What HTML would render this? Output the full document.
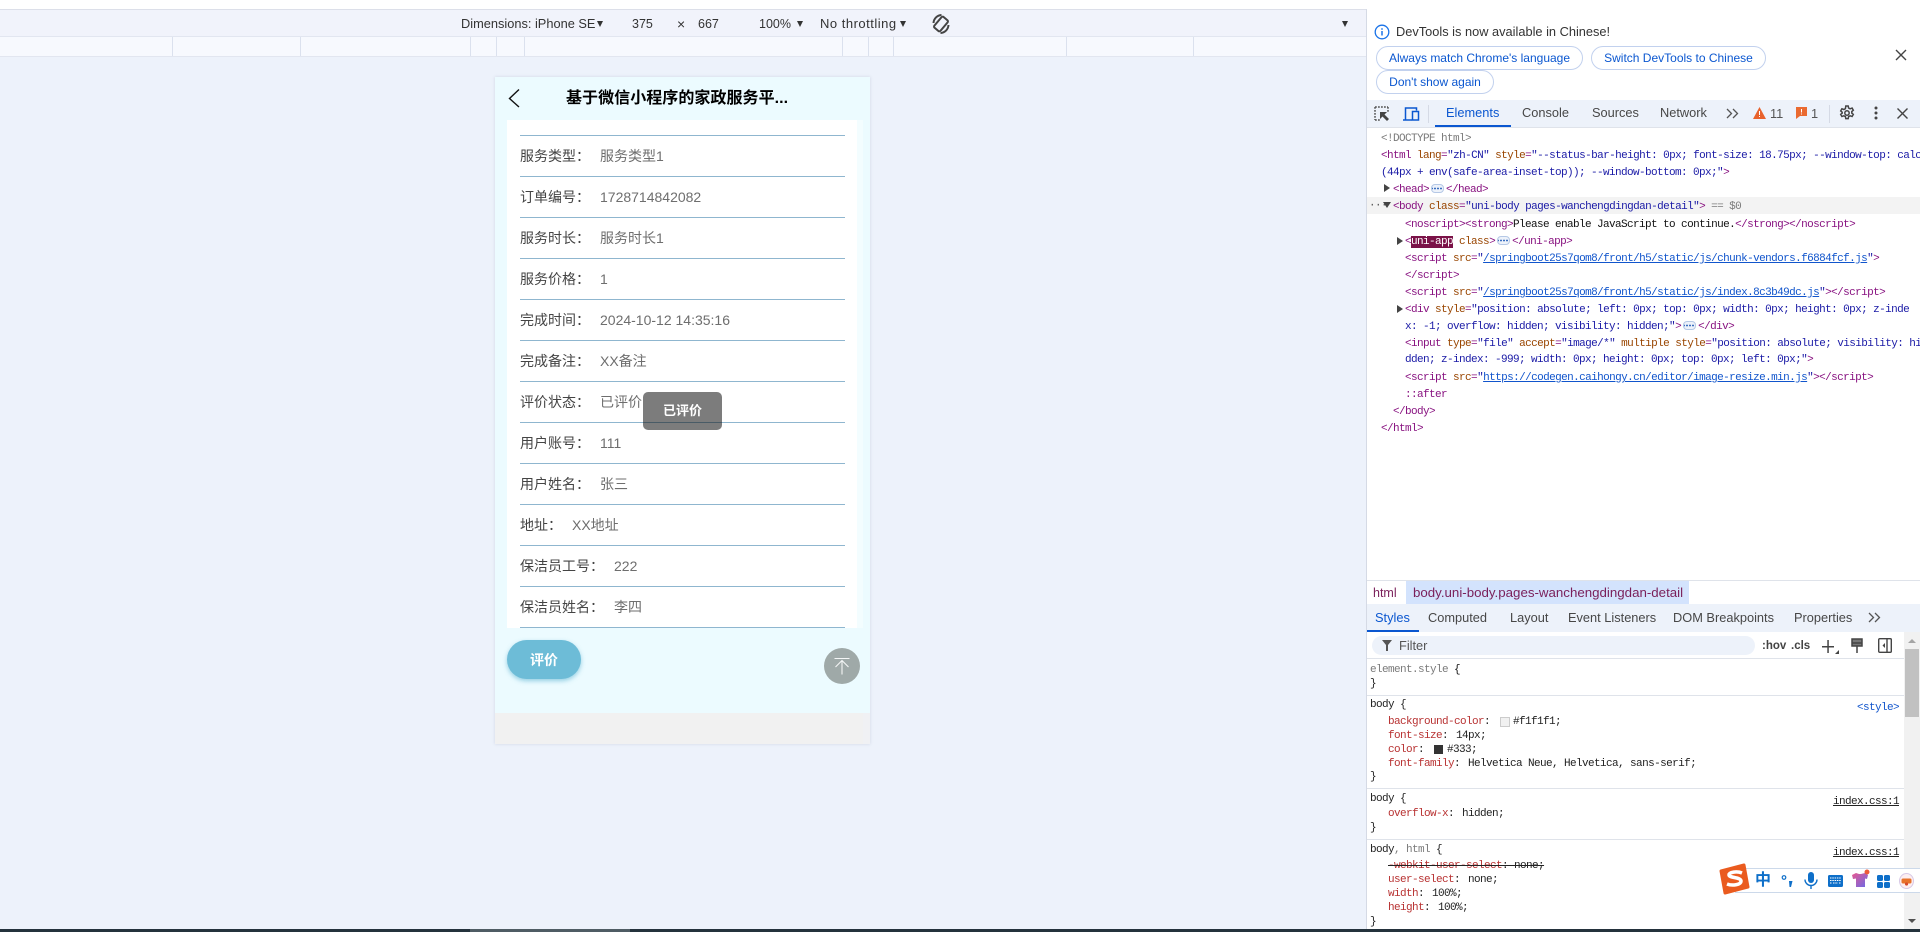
<!DOCTYPE html>
<html lang="zh-CN"><head><meta charset="utf-8"><title>DevTools</title>
<style>
html,body{margin:0;padding:0;width:1920px;height:932px;overflow:hidden;background:#edf2fb;font-family:"Liberation Sans","Noto Sans CJK SC",sans-serif}
div,span.a,svg.a{position:absolute}
.t{white-space:nowrap;font-size:12px;line-height:16px;height:16px;color:#333}
.r{position:absolute;top:37px;width:1px;height:19px;background:#dbe1ee}
.l{position:absolute;left:520px;width:325px;height:1px;background:#8fb6cf}
.k,.v{position:absolute;font-size:14px;line-height:20px;height:20px;white-space:nowrap}
.k{left:520px;color:#444}.v{color:#6e6e6e}
.tab{position:absolute;white-space:nowrap;font-size:12.8px;line-height:16px;height:16px;color:#474747}
.btn{position:absolute;box-sizing:border-box;height:24px;border:1px solid #c2d1ee;border-radius:12px;background:#fff;color:#0b57d0;font-size:12px;line-height:22px;text-align:center;white-space:nowrap}
.c{position:absolute;margin-top:1px;font-family:"Liberation Mono","Noto Sans CJK SC",monospace;font-size:11px;letter-spacing:-.6px;line-height:14px;height:14px;white-space:pre;color:#222}
.g{color:#881280}.n{color:#994500}.s{color:#1a1aa6}.u{color:#1155cc;text-decoration:underline}.h{color:#7b7b7b}.p{color:#b83232}.w{color:#111}
.dots{display:inline-block;width:13px;height:9px;border:1px solid #b5c8e6;border-radius:4px;background:#edf2fa radial-gradient(circle,#3b6fc0 0 .8px,transparent 1px) 1.500px 50%/3px 3px repeat-x;vertical-align:-1px;margin:0 2px;box-sizing:border-box;position:relative}
.tri{position:absolute;width:0;height:0;border-style:solid;border-color:transparent}
.sep{position:absolute;left:1366px;width:538px;height:1px;background:#dfe3ea}
</style></head><body>
<!-- top -->
<div style="left:0;top:0;width:1920px;height:9px;background:#fff"></div>
<div style="left:0;top:9px;width:1366px;height:1px;background:#dcdfe9"></div>
<div style="left:0;top:10px;width:1366px;height:26px;background:#f1f3fb"></div>
<div style="left:0;top:36px;width:1366px;height:1px;background:#e2e6f0"></div>
<div style="left:0;top:37px;width:1366px;height:19px;background:#f7f9fe"></div>
<div style="left:0;top:56px;width:1366px;height:1px;background:#e2e6f0"></div>
<div class="t" style="left:461px;top:16px;font-size:12.8px">Dimensions: iPhone SE</div>
<div class="tri" style="left:597px;top:21px;border-width:6px 3.500px 0;border-top-color:#333"></div>
<div class="t" style="left:632px;top:16px;font-size:12.500px">375</div>
<div class="t" style="left:677px;top:16px;font-size:14px">×</div>
<div class="t" style="left:698px;top:16px;font-size:12.500px">667</div>
<div class="t" style="left:759px;top:16px;font-size:12.500px">100%</div>
<div class="tri" style="left:797px;top:21px;border-width:6px 3.500px 0;border-top-color:#333"></div>
<div class="t" style="left:820px;top:16px;font-size:13px;letter-spacing:.5px">No throttling</div>
<div class="tri" style="left:900px;top:21px;border-width:6px 3.500px 0;border-top-color:#333"></div>
<svg class="a" style="left:931px;top:12px" width="20" height="24" viewBox="0 0 20 24" fill="none" stroke="#444" stroke-width="2"><rect x="6" y="5" width="8" height="14" rx="1.500" transform="rotate(40 10 12)"/><path d="M2.500 11a8.500 8.500 0 0 1 8-8M17.500 13a8.500 8.500 0 0 1-8 8"/></svg>
<div class="tri" style="left:1342px;top:21px;border-width:6px 3.500px 0;border-top-color:#333"></div>
<i class="r" style="left:172px"></i><i class="r" style="left:300px"></i><i class="r" style="left:470px"></i><i class="r" style="left:496px"></i><i class="r" style="left:524px"></i><i class="r" style="left:842px"></i><i class="r" style="left:868px"></i><i class="r" style="left:893px"></i><i class="r" style="left:1066px"></i><i class="r" style="left:1193px"></i>

<!-- phone -->
<div style="left:495px;top:77px;width:375px;height:667px;background:#ecfbff;box-shadow:0 0 3px rgba(120,130,160,.25)"></div>
<div style="left:495px;top:713px;width:368px;height:31px;background:#f1f1f1"></div>
<div style="left:863px;top:713px;width:7px;height:31px;background:#f0f1f4"></div>
<svg class="a" style="left:505px;top:87px" width="18" height="22" viewBox="0 0 18 22" fill="none" stroke="#111" stroke-width="1.400"><path d="M14 2.500 4.500 11.500 14 20"/></svg>
<div style="left:566px;top:88px;font-size:16px;font-weight:700;line-height:22px;color:#000;white-space:nowrap;letter-spacing:.05px">基于微信小程序的家政服务平...</div>
<div style="left:857px;top:120px;width:6px;height:508px;background:#f3fdff"></div>
<div style="left:507px;top:120px;width:350px;height:508px;background:#fff"></div>
<i class="l" style="top:135px"></i><i class="l" style="top:176px"></i><i class="l" style="top:217px"></i><i class="l" style="top:258px"></i><i class="l" style="top:299px"></i><i class="l" style="top:340px"></i><i class="l" style="top:381px"></i><i class="l" style="top:422px"></i><i class="l" style="top:463px"></i><i class="l" style="top:504px"></i><i class="l" style="top:545px"></i><i class="l" style="top:586px"></i><i class="l" style="top:627px"></i>
<div class="k" style="top:146px">服务类型：</div><div class="v" style="left:600px;top:146px">服务类型1</div>
<div class="k" style="top:187px">订单编号：</div><div class="v" style="left:600px;top:187px">1728714842082</div>
<div class="k" style="top:228px">服务时长：</div><div class="v" style="left:600px;top:228px">服务时长1</div>
<div class="k" style="top:269px">服务价格：</div><div class="v" style="left:600px;top:269px">1</div>
<div class="k" style="top:310px">完成时间：</div><div class="v" style="left:600px;top:310px">2024-10-12 14:35:16</div>
<div class="k" style="top:351px">完成备注：</div><div class="v" style="left:600px;top:351px">XX备注</div>
<div class="k" style="top:392px">评价状态：</div><div class="v" style="left:600px;top:392px">已评价</div>
<div class="k" style="top:433px">用户账号：</div><div class="v" style="left:600px;top:433px">111</div>
<div class="k" style="top:474px">用户姓名：</div><div class="v" style="left:600px;top:474px">张三</div>
<div class="k" style="top:515px">地址：</div><div class="v" style="left:572px;top:515px">XX地址</div>
<div class="k" style="top:556px">保洁员工号：</div><div class="v" style="left:614px;top:556px">222</div>
<div class="k" style="top:597px">保洁员姓名：</div><div class="v" style="left:614px;top:597px">李四</div>
<div style="left:643px;top:392px;width:79px;height:38px;border-radius:5px;background:rgba(17,17,17,.55);color:#fff;font-size:13px;font-weight:700;line-height:38px;text-align:center">已评价</div>
<div style="left:507px;top:640px;width:74px;height:39px;border-radius:20px;background:#6dbcd7;box-shadow:0 2px 5px rgba(109,188,215,.7);color:#fff;font-size:14px;font-weight:700;line-height:41px;text-align:center">评价</div>
<div style="left:824px;top:648px;width:36px;height:36px;border-radius:18px;background:#9fa9a8"></div>
<svg class="a" style="left:824px;top:648px" width="36" height="36" viewBox="0 0 36 36" fill="none" stroke="#f4f6f6" stroke-width="1.100"><path d="M10.500 10.500h15M18 26.500V12.500M11.500 19 18 12.500l6.500 6.500"/></svg>

<!-- devtools -->
<div style="left:1366px;top:9px;width:554px;height:920px;background:#fff;border-left:1px solid #d5dae5;box-sizing:border-box"></div>
<svg class="a" style="left:1374px;top:24px" width="16" height="16" viewBox="0 0 16 16" fill="none"><circle cx="8" cy="8" r="6.800" stroke="#1a73e8" stroke-width="1.300"/><path d="M8 7v4.500M8 4.300v1.400" stroke="#1a73e8" stroke-width="1.500"/></svg>
<div class="tab" style="left:1396px;top:24px;color:#333">DevTools is now available in Chinese!</div>
<div class="btn" style="left:1376px;top:46px;width:207px">Always match Chrome's language</div>
<div class="btn" style="left:1591px;top:46px;width:175px">Switch DevTools to Chinese</div>
<div class="btn" style="left:1376px;top:70px;width:118px">Don't show again</div>
<svg class="a" style="left:1895px;top:49px" width="12" height="12" viewBox="0 0 12 12" stroke="#444" stroke-width="1.400"><path d="M1 1l10 10M11 1 1 11"/></svg>

<div style="left:1367px;top:100px;width:553px;height:27px;background:#edf2fa"></div>
<svg class="a" style="left:1374px;top:106px" width="16" height="16" viewBox="0 0 16 16" fill="none"><path d="M1 1h13M1 1v13M1 14h5M14 1v5" stroke="#555" stroke-width="1.500" stroke-dasharray="1.800 1.200"/><path d="M6 6h7l-2.500 2.500L15 13l-2 2-4.500-4.500L6 13z" fill="#444"/></svg>
<svg class="a" style="left:1402px;top:106px" width="18" height="16" viewBox="0 0 18 16" fill="none" stroke="#0b57d0" stroke-width="1.500"><path d="M1 14h9M3.500 14V2h11v2.500"/><rect x="10.500" y="5.500" width="6" height="8.500"/></svg>
<div style="left:1428px;top:105px;width:1px;height:18px;background:#d5dae5"></div>
<div class="tab" style="left:1446px;top:105px;color:#0b57d0">Elements</div>
<div style="left:1435px;top:125px;width:76px;height:2px;background:#0b57d0"></div>
<div class="tab" style="left:1522px;top:105px">Console</div>
<div class="tab" style="left:1592px;top:105px">Sources</div>
<div class="tab" style="left:1660px;top:105px">Network</div>
<svg class="a" style="left:1726px;top:108px" width="13" height="11" viewBox="0 0 13 11" fill="none" stroke="#555" stroke-width="1.300"><path d="M1 1l4.500 4.500L1 10M7 1l4.500 4.500L7 10"/></svg>
<svg class="a" style="left:1753px;top:107px" width="13" height="12" viewBox="0 0 13 12"><path d="M6.500 0 13 12H0z" fill="#e8622c"/><path d="M6 4h1v4H6zM6 9h1v1H6z" fill="#fff"/></svg>
<div class="tab" style="left:1770px;top:106px;color:#555">11</div>
<svg class="a" style="left:1796px;top:107px" width="11" height="12" viewBox="0 0 11 12"><path d="M0 0h11v9H4l-4 3z" fill="#ea6a30"/><path d="M5 2h1v3.500H5zM5 6.500h1v1H5z" fill="#fff"/></svg>
<div class="tab" style="left:1811px;top:106px;color:#555">1</div>
<div style="left:1829px;top:105px;width:1px;height:18px;background:#d5dae5"></div>
<svg class="a" style="left:1839px;top:105px" width="16" height="16" viewBox="0 0 16 16" fill="none" stroke="#444" stroke-width="1.500"><circle cx="8" cy="8" r="2.200"/><path d="M6.800 1h2.400l.4 2 1.500.8 2-.7 1.200 2.100-1.500 1.300v1.600l1.500 1.300-1.200 2.100-2-.7-1.500.8-.4 2H6.800l-.4-2-1.500-.8-2 .7-1.200-2.100 1.500-1.300V7.200L1.700 5.900l1.200-2.100 2 .7 1.500-.8z"/></svg>
<svg class="a" style="left:1874px;top:106px" width="4" height="14" viewBox="0 0 4 14" fill="#444"><circle cx="2" cy="2" r="1.500"/><circle cx="2" cy="7" r="1.500"/><circle cx="2" cy="12" r="1.500"/></svg>
<svg class="a" style="left:1897px;top:108px" width="11" height="11" viewBox="0 0 11 11" stroke="#444" stroke-width="1.400"><path d="M.5.500l10 10M10.500.500l-10 10"/></svg>
<div style="left:1367px;top:127px;width:553px;height:1px;background:#dfe3ea"></div>

<div style="left:1367px;top:197px;width:553px;height:17px;background:#f3f3f3"></div>
<div class="c h" style="left:1381px;top:131px">&lt;!DOCTYPE html&gt;</div>
<div class="c" style="left:1381px;top:148px"><span class="g">&lt;html</span> <span class="n">lang</span><span class="g">=</span><span class="s">"zh-CN"</span> <span class="n">style</span><span class="g">=</span><span class="s">"--status-bar-height: 0px; font-size: 18.75px; --window-top: calc</span></div>
<div class="c" style="left:1381px;top:165px"><span class="s">(44px + env(safe-area-inset-top)); --window-bottom: 0px;"</span><span class="g">&gt;</span></div>
<div class="tri" style="left:1384px;top:184px;border-width:4px 0 4px 6px;border-left-color:#444"></div>
<div class="c" style="left:1393px;top:182px"><span class="g">&lt;head&gt;</span><span class="dots"></span><span class="g">&lt;/head&gt;</span></div>
<div class="c h" style="left:1369px;top:198px;color:#555">···</div>
<div class="tri" style="left:1383px;top:202px;border-width:6px 4px 0;border-top-color:#444"></div>
<div class="c" style="left:1393px;top:199px"><span class="g">&lt;body</span> <span class="n">class</span><span class="g">=</span><span class="s">"uni-body pages-wanchengdingdan-detail"</span><span class="g">&gt;</span> <span class="h">== $0</span></div>
<div class="c g" style="left:1405px;top:217px">&lt;noscript&gt;&lt;strong&gt;<span class="w">Please enable JavaScript to continue.</span>&lt;/strong&gt;&lt;/noscript&gt;</div>
<div class="tri" style="left:1397px;top:237px;border-width:4px 0 4px 6px;border-left-color:#444"></div>
<div class="c" style="left:1405px;top:234px"><span class="g">&lt;</span><span style="background:#7b1248;color:#fff">uni-app</span> <span class="n">class</span><span class="g">&gt;</span><span class="dots"></span><span class="g">&lt;/uni-app&gt;</span></div>
<div class="c" style="left:1405px;top:251px"><span class="g">&lt;script</span> <span class="n">src</span><span class="g">=</span><span class="s">"</span><span class="u">/springboot25s7qom8/front/h5/static/js/chunk-vendors.f6884fcf.js</span><span class="s">"</span><span class="g">&gt;</span></div>
<div class="c g" style="left:1405px;top:268px">&lt;/script&gt;</div>
<div class="c" style="left:1405px;top:285px"><span class="g">&lt;script</span> <span class="n">src</span><span class="g">=</span><span class="s">"</span><span class="u">/springboot25s7qom8/front/h5/static/js/index.8c3b49dc.js</span><span class="s">"</span><span class="g">&gt;&lt;/script&gt;</span></div>
<div class="tri" style="left:1397px;top:305px;border-width:4px 0 4px 6px;border-left-color:#444"></div>
<div class="c" style="left:1405px;top:302px"><span class="g">&lt;div</span> <span class="n">style</span><span class="g">=</span><span class="s">"position: absolute; left: 0px; top: 0px; width: 0px; height: 0px; z-inde</span></div>
<div class="c" style="left:1405px;top:319px"><span class="s">x: -1; overflow: hidden; visibility: hidden;"</span><span class="g">&gt;</span><span class="dots"></span><span class="g">&lt;/div&gt;</span></div>
<div class="c" style="left:1405px;top:336px"><span class="g">&lt;input</span> <span class="n">type</span><span class="g">=</span><span class="s">"file"</span> <span class="n">accept</span><span class="g">=</span><span class="s">"image/*"</span> <span class="n">multiple</span> <span class="n">style</span><span class="g">=</span><span class="s">"position: absolute; visibility: hi</span></div>
<div class="c" style="left:1405px;top:352px"><span class="s">dden; z-index: -999; width: 0px; height: 0px; top: 0px; left: 0px;"</span><span class="g">&gt;</span></div>
<div class="c" style="left:1405px;top:370px"><span class="g">&lt;script</span> <span class="n">src</span><span class="g">=</span><span class="s">"</span><span class="u">https://codegen.caihongy.cn/editor/image-resize.min.js</span><span class="s">"</span><span class="g">&gt;&lt;/script&gt;</span></div>
<div class="c g" style="left:1405px;top:387px">::after</div>
<div class="c g" style="left:1393px;top:404px">&lt;/body&gt;</div>
<div class="c g" style="left:1381px;top:421px">&lt;/html&gt;</div>

<!-- breadcrumbs -->
<div class="sep" style="top:580px;left:1367px;width:553px"></div>
<div style="left:1406px;top:581px;width:283px;height:24px;background:#d3e3fd"></div>
<div class="t" style="left:1373px;top:585px;color:#7a1f5a;font-size:12.500px">html</div>
<div class="t" style="left:1413px;top:585px;color:#7a1f5a;font-size:13.300px">body.uni-body.pages-wanchengdingdan-detail</div>
<div style="left:1367px;top:604px;width:553px;height:28px;background:#edf2fa"></div>
<div class="tab" style="left:1375px;top:610px;color:#0b57d0">Styles</div>
<div style="left:1367px;top:630px;width:52px;height:2px;background:#0b57d0"></div>
<div class="tab" style="left:1428px;top:610px">Computed</div>
<div class="tab" style="left:1510px;top:610px">Layout</div>
<div class="tab" style="left:1568px;top:610px">Event Listeners</div>
<div class="tab" style="left:1673px;top:610px">DOM Breakpoints</div>
<div class="tab" style="left:1794px;top:610px">Properties</div>
<svg class="a" style="left:1868px;top:612px" width="13" height="11" viewBox="0 0 13 11" fill="none" stroke="#555" stroke-width="1.300"><path d="M1 1l4.500 4.500L1 10M7 1l4.500 4.500L7 10"/></svg>
<div style="left:1372px;top:636px;width:383px;height:19px;border-radius:10px;background:#edf2fa"></div>
<svg class="a" style="left:1382px;top:640px" width="10" height="11" viewBox="0 0 10 11"><path d="M0 0h10L6 5v6H4V5z" fill="#555"/></svg>
<div class="tab" style="left:1399px;top:638px;color:#555">Filter</div>
<div class="t" style="left:1762px;top:638px;font-weight:700;font-size:11.500px;color:#444">:hov</div>
<div class="t" style="left:1791px;top:638px;font-weight:700;font-size:11.500px;color:#444">.cls</div>
<svg class="a" style="left:1822px;top:640px" width="18" height="15" viewBox="0 0 18 15"><path d="M0 6h12v1.500H0zM5.300 0h1.500v13H5.300z" fill="#444"/><path d="M17 10v4h-4z" fill="#444"/></svg>
<svg class="a" style="left:1851px;top:638px" width="12" height="16" viewBox="0 0 12 16" fill="none" stroke="#444" stroke-width="1.500"><rect x="1" y="1" width="10" height="7" fill="#777"/><path d="M1 5h10M6 8v7"/></svg>
<svg class="a" style="left:1878px;top:638px" width="14" height="15" viewBox="0 0 14 15" fill="none" stroke="#444" stroke-width="1.400"><rect x=".7" y=".7" width="12.600" height="13.600" rx="1"/><path d="M9 1v13"/><path d="M7 5v5L4.500 7.500z" fill="#444" stroke="none"/></svg>
<div style="left:1367px;top:658px;width:537px;height:1px;background:#dfe3ea"></div>

<div class="c h" style="left:1370px;top:662px">element.style <span class="w">{</span></div>
<div class="c" style="left:1370px;top:676px">}</div>
<div class="sep" style="top:695px;left:1367px;width:537px"></div>
<div class="c" style="left:1370px;top:697px">body {</div>
<div class="c" style="right:21px;top:700px;color:#1155cc">&lt;style&gt;</div>
<div class="c" style="left:1388px;top:714px"><span class="p">background-color</span>:</div>
<div style="left:1500px;top:717px;width:8px;height:8px;background:#f1f1f1;border:1px solid #ccc"></div>
<div class="c" style="left:1513px;top:714px">#f1f1f1;</div>
<div class="c" style="left:1388px;top:728px"><span class="p">font-size</span>:<span style="margin-left:8px">14px;</span></div>
<div class="c" style="left:1388px;top:742px"><span class="p">color</span>:</div>
<div style="left:1434px;top:745px;width:9px;height:9px;background:#333"></div>
<div class="c" style="left:1447px;top:742px">#333;</div>
<div class="c" style="left:1388px;top:756px"><span class="p">font-family</span>:<span style="margin-left:8px">Helvetica Neue, Helvetica, sans-serif;</span></div>
<div class="c" style="left:1370px;top:769px">}</div>
<div class="sep" style="top:788px;left:1367px;width:537px"></div>
<div class="c" style="left:1370px;top:791px">body {</div>
<div class="c" style="right:21px;top:794px;text-decoration:underline">index.css:1</div>
<div class="c" style="left:1388px;top:806px"><span class="p">overflow-x</span>:<span style="margin-left:8px">hidden;</span></div>
<div class="c" style="left:1370px;top:820px">}</div>
<div class="sep" style="top:839px;left:1367px;width:537px"></div>
<div class="c" style="left:1370px;top:842px">body<span class="h">, html</span> {</div>
<div class="c" style="right:21px;top:845px;text-decoration:underline">index.css:1</div>
<div class="c" style="left:1388px;top:858px;text-decoration:line-through"><span class="p">-webkit-user-select</span>: none;</div>
<div class="c" style="left:1388px;top:872px"><span class="p">user-select</span>:<span style="margin-left:8px">none;</span></div>
<div class="c" style="left:1388px;top:886px"><span class="p">width</span>:<span style="margin-left:8px">100%;</span></div>
<div class="c" style="left:1388px;top:900px"><span class="p">height</span>:<span style="margin-left:8px">100%;</span></div>
<div class="c" style="left:1370px;top:914px">}</div>

<!-- scrollbar -->
<div style="left:1904px;top:632px;width:16px;height:297px;background:#f1f1f1"></div>
<div style="left:1905px;top:649px;width:14px;height:68px;background:#c1c1c1"></div>
<div class="tri" style="left:1908px;top:639px;border-width:0 4px 4px;border-bottom-color:#a5a5a5"></div>
<div class="tri" style="left:1908px;top:919px;border-width:4px 4px 0;border-top-color:#505050"></div>

<!-- IME -->
<div style="left:1735px;top:868px;width:185px;height:25px;box-sizing:border-box;background:#fff;border:1px solid #ccd9ea;border-right:0"></div>
<svg class="a" style="left:1719px;top:863px" width="31" height="32" viewBox="0 0 31 32"><path d="M2 8 25 2l4 22-23 6z" fill="#ea5b1f" stroke="#ea5b1f" stroke-width="3" stroke-linejoin="round"/><path d="M23 10c-5-2-13-1-13 2s12 2 12 6-9 5-14 3" fill="none" stroke="#fff" stroke-width="3.500"/></svg>
<div style="left:1755px;top:870px;font-size:16px;font-weight:700;line-height:21px;color:#0e6fc9">中</div>
<svg class="a" style="left:1781px;top:875px" width="14" height="14" viewBox="0 0 14 14" fill="#0e6fc9"><circle cx="3" cy="2.500" r="1.800" fill="none" stroke="#0e6fc9" stroke-width="1.200"/><path d="M8 6h3.500l-1.500 6H8.500z"/></svg>
<svg class="a" style="left:1804px;top:872px" width="14" height="18" viewBox="0 0 14 18" fill="none"><rect x="4" y="0" width="6" height="11" rx="3" fill="#0e6fc9"/><path d="M1 7.500a6 6 0 0 0 12 0M7 14v3" stroke="#0e6fc9" stroke-width="1.400"/></svg>
<svg class="a" style="left:1828px;top:875px" width="15" height="13" viewBox="0 0 15 13"><rect width="15" height="12" rx="1.500" fill="#0e6fc9"/><path d="M2 3h11M2 5.500h11M2 8h2M5 8h5M11 8h2" stroke="#fff" stroke-width="1" stroke-dasharray="1.500 .8"/></svg>
<svg class="a" style="left:1852px;top:869px" width="18" height="19" viewBox="0 0 18 19"><defs><linearGradient id="sh" x1="0" y1="0" x2="1" y2="1"><stop offset="0" stop-color="#e8578f"/><stop offset="1" stop-color="#6a6ae8"/></linearGradient></defs><path d="M0 6l4-2 3 1h2l4-1 3 2-1 4-2-.5V18H4V9.500L1 10z" fill="url(#sh)"/><circle cx="15" cy="3" r="2.500" fill="#ee5a3a"/></svg>
<svg class="a" style="left:1877px;top:875px" width="13" height="13" viewBox="0 0 13 13" fill="#0e6fc9"><rect width="6" height="6" rx="1.500"/><rect x="7" width="6" height="6" rx="1.500"/><rect y="7" width="6" height="6" rx="1.500"/><rect x="7" y="7" width="6" height="6" rx="1.500"/></svg>
<svg class="a" style="left:1899px;top:871px" width="15" height="18" viewBox="0 0 15 18"><ellipse cx="7.500" cy="10" rx="7" ry="7.500" fill="#fdeef0" stroke="#d7c8e6"/><rect x="2.500" y="7.500" width="10" height="5" rx="1.500" fill="#e8732c"/><circle cx="7.500" cy="13" r="1.600" fill="#d84b2c"/></svg>

<!-- bottom bar -->
<div style="left:0;top:929px;width:1920px;height:3px;background:#24323c"></div>
<div style="left:470px;top:929px;width:160px;height:3px;background:#4f5c64"></div>
</body></html>
